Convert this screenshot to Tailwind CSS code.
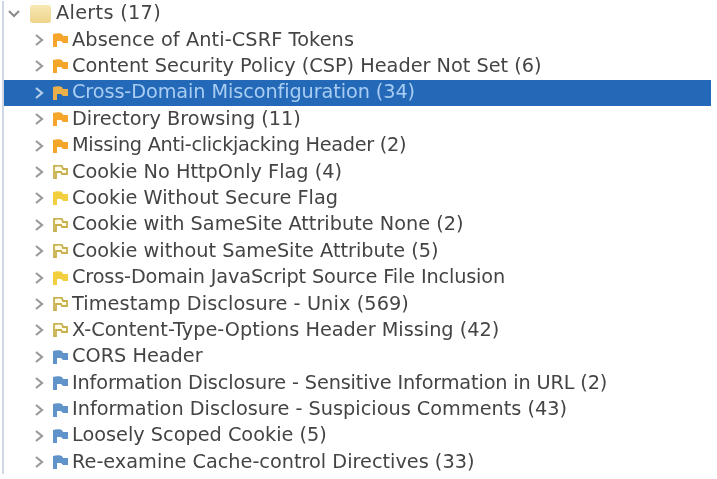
<!DOCTYPE html>
<html lang="en">
<head>
    <meta charset="UTF-8">
    <title>Alerts</title>
    <script src="https://cdn.jsdelivr.net/npm/@tailwindcss/browser@4"></script>
</head>
<body class="bg-white overflow-hidden">
    <svg class="hidden">
        <symbol id="chev-right" viewBox="0 0 12 14"><path d="M3 2l6 5-6 5" fill="none" stroke="currentColor" stroke-width="2.2"/></symbol>
        <symbol id="chev-down" viewBox="0 0 14 12"><path d="M2 3l5 5 5-5" fill="none" stroke="currentColor" stroke-width="2"/></symbol>
        <symbol id="flag" viewBox="0 0 15 14"><path d="M0 1C3 0 7 0 9 1l1 2h5v7h-5L8 8H4v6H0z" fill="currentColor"/></symbol>
        <symbol id="flag-low" viewBox="0 0 15 14"><path d="M1 1c3-.6 6-.6 8 0l1 3h4v5H9L8 7H3v6H1z" fill="#fffbe6" stroke="currentColor" stroke-width="1.8"/></symbol>
    </svg>

    <div class="w-[717px] h-[479px] blur-[0.6px] font-['DejaVu_Sans',sans-serif] text-[19.3px] text-[#444444]">
        <ul id="tree" class="w-[709px] h-[473px] mt-[0.5px] ml-[2px] border-l-2 border-[#cfd6e6]">
            <li class="h-[26.4px] flex items-center">
                <svg class="w-[14px] h-[12px] ml-[3px] text-[#8a8a8a]"><use href="#chev-down"/></svg>
                <span class="ml-[9px] w-[21px] h-[18px] rounded-[3px] bg-linear-to-b from-[#f8e8b4] to-[#eed48a]"></span>
                <span class="ml-[5px] tracking-[0.3px]">Alerts (17)</span>
            </li>
        </ul>
    </div>

    <script>
        // third value: hand-tuned spacing where the line length was off
        const alerts = [
            ['Absence of Anti-CSRF Tokens', 'high', 'tracking-[0.1px]'],
            ['Content Security Policy (CSP) Header Not Set (6)', 'high', ''],
            ['Cross-Domain Misconfiguration (34)', 'selected', 'tracking-[-0.1px]'],
            ['Directory Browsing (11)', 'high', ''],
            ['Missing Anti-clickjacking Header (2)', 'high', 'tracking-[-0.3px]'],
            ['Cookie No HttpOnly Flag (4)', 'low', ''],
            ['Cookie Without Secure Flag', 'medium', ''],
            ['Cookie with SameSite Attribute None (2)', 'low', ''],
            ['Cookie without SameSite Attribute (5)', 'low', ''],
            ['Cross-Domain JavaScript Source File Inclusion', 'medium', 'tracking-[-0.15px]'],
            ['Timestamp Disclosure - Unix (569)', 'low', 'tracking-[0.1px]'],
            ['X-Content-Type-Options Header Missing (42)', 'low', ''],
            ['CORS Header', 'info', ''],
            ['Information Disclosure - Sensitive Information in URL (2)', 'info', 'tracking-[-0.15px]'],
            ['Information Disclosure - Suspicious Comments (43)', 'info', ''],
            ['Loosely Scoped Cookie (5)', 'info', ''],
            ['Re-examine Cache-control Directives (33)', 'info', ''],
        ];

        const flags = {
            high: ['flag', 'text-[#f5a52a]'],
            selected: ['flag', 'text-[#e9b04a]'],
            medium: ['flag', 'text-[#f2cf3f]'],
            low: ['flag-low', 'text-[#c9b04e]'],
            info: ['flag', 'text-[#5f93c9]'],
        };

        const tree = document.getElementById('tree');
        alerts.forEach(([name, level, spacing]) => {
            const selected = level === 'selected';
            const [icon, color] = flags[level];
            const row = document.createElement('li');
            row.className = selected
                ? 'h-[26.4px] flex items-center bg-[#2369b8] text-[#a9cdf2]'
                : 'h-[26.4px] flex items-center';
            row.innerHTML = `
                <svg class="w-[12px] h-[14px] ml-[29px] ${selected ? 'text-[#b5cfe9]' : 'text-[#9a9a9a]'}"><use href="#chev-right"/></svg>
                <svg class="w-[15px] h-[14px] ml-[8px] ${color}"><use href="#${icon}"/></svg>
                <span class="ml-[4px] whitespace-nowrap ${spacing}">${name}</span>
            `;
            tree.appendChild(row);
        });
    </script>
</body>
</html>
